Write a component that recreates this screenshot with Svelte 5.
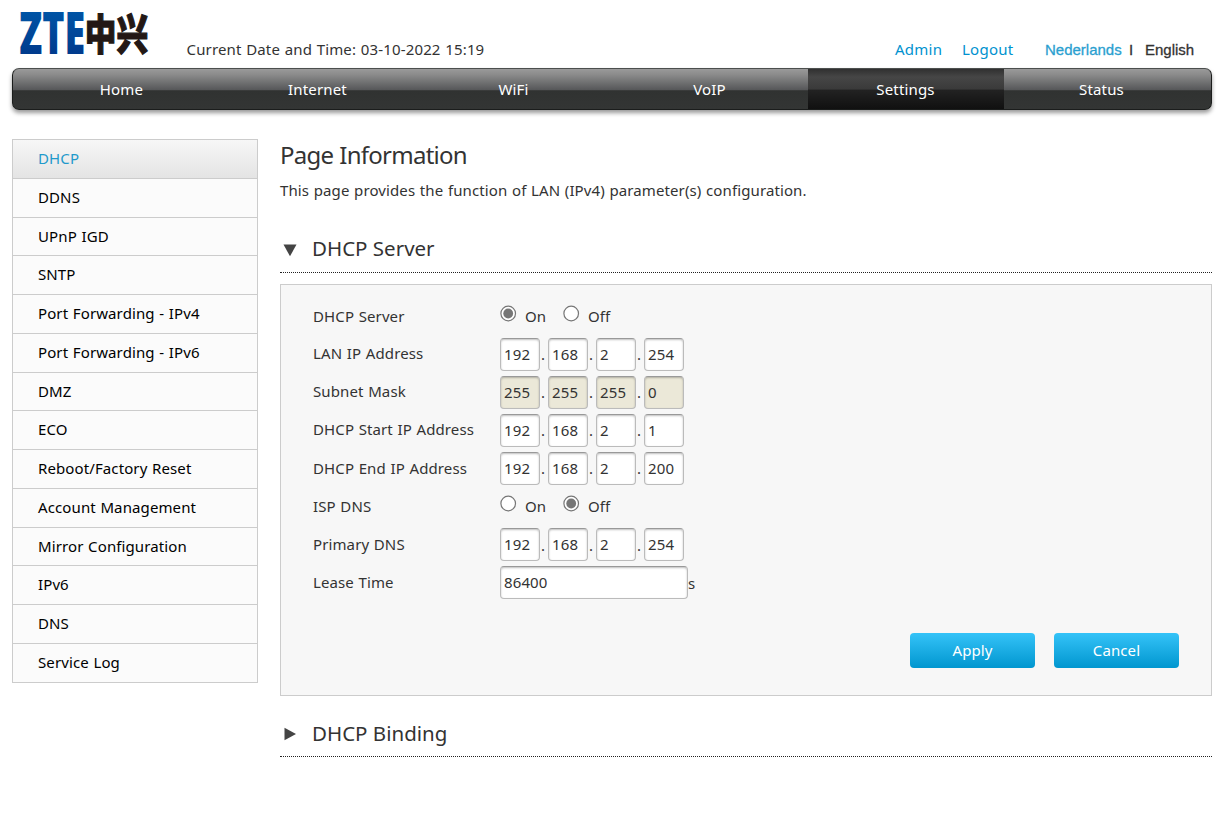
<script>
  const tabs = ['Home', 'Internet', 'WiFi', 'VoIP', 'Settings', 'Status'];
  const items = ['DHCP', 'DDNS', 'UPnP IGD', 'SNTP', 'Port Forwarding - IPv4', 'Port Forwarding - IPv6', 'DMZ', 'ECO', 'Reboot/Factory Reset', 'Account Management', 'Mirror Configuration', 'IPv6', 'DNS', 'Service Log'];
  const rows = [
    { label: 'DHCP Server', kind: 'radio', on: true },
    { label: 'LAN IP Address', kind: 'ip', value: [192, 168, 2, 254] },
    { label: 'Subnet Mask', kind: 'ip', value: [255, 255, 255, 0], disabled: true },
    { label: 'DHCP Start IP Address', kind: 'ip', value: [192, 168, 2, 1] },
    { label: 'DHCP End IP Address', kind: 'ip', value: [192, 168, 2, 200] },
    { label: 'ISP DNS', kind: 'radio', on: false },
    { label: 'Primary DNS', kind: 'ip', value: [192, 168, 2, 254] },
    { label: 'Lease Time', kind: 'text', value: 86400 },
  ];
</script>

{#snippet radio(checked)}
  <svg class="radio" width="17" height="17" viewBox="0 0 17 17">
    <circle cx="8.2" cy="8.5" r="7.3" fill="#fff" stroke="#767676" stroke-width="1.2" />
    {#if checked}<circle cx="8.2" cy="8.5" r="4.9" fill="#767676" />{/if}
  </svg>
{/snippet}

<div class="page">
  <header>
    <svg class="logo" width="132" height="48" viewBox="0 0 132 48">
      <defs>
        <linearGradient id="blue" x1="0" y1="0" x2="0" y2="1">
          <stop offset="0.2" stop-color="#0057a8" /><stop offset="0.8" stop-color="#003a8c" />
        </linearGradient>
      </defs>
      <text class="zte" transform="translate(2.3 44.8) scale(.6 1)" textLength="110" lengthAdjust="spacingAndGlyphs" fill="url(#blue)">ZTE</text>
      <text class="cjk" transform="translate(67.8 40.5) scale(1.02 1.36)" fill="#231815" stroke="#231815" stroke-width=".9">中兴</text>
    </svg>
    <span class="date">Current Date and Time: 03-10-2022 15:19</span>
    <span class="link admin">Admin</span>
    <span class="link logout">Logout</span>
    <span class="lang nl">Nederlands</span>
    <span class="lang bar">I</span>
    <span class="lang">English</span>
  </header>

  <nav class="tabs">
    {#each tabs as tab}
      <span class="tab" class:active={tab === 'Settings'}>{tab}</span>
    {/each}
  </nav>

  <div class="body">
    <aside>
      {#each items as item, i}
        <div class="item" class:current={i === 0}>{item}</div>
      {/each}
    </aside>

    <main>
      <h1>Page Information</h1>
      <p class="info">This page provides the function of LAN (IPv4) parameter(s) configuration.</p>

      <h2>
        <svg width="14" height="14" viewBox="0 0 14 14"><path d="M.5 1.5h13L7 13.3z" fill="#444" /></svg>
        <span>DHCP Server</span>
      </h2>

      <section class="panel">
        {#each rows as row}
          <div class="row">
            <span class="label" class:raised={row.kind !== 'radio'}>{row.label}</span>
            {#if row.kind === 'radio'}
              {@render radio(row.on)}<span class="opt on">On</span>
              {@render radio(!row.on)}<span class="opt">Off</span>
            {:else if row.kind === 'ip'}
              {#each row.value as part, i}
                <span class="field" class:disabled={row.disabled}>{part}</span>
                {#if i < 3}<span class="dot">.</span>{/if}
              {/each}
            {:else}
              <span class="field wide">{row.value}</span><span class="unit">s</span>
            {/if}
          </div>
        {/each}
        <div class="actions">
          <span class="button">Apply</span>
          <span class="button">Cancel</span>
        </div>
      </section>

      <h2 class="second">
        <svg width="14" height="14" viewBox="0 0 14 14"><path d="M1.5 .7v12.6L13 7z" fill="#444" /></svg>
        <span>DHCP Binding</span>
      </h2>
    </main>
  </div>
</div>

<style>
  :global(body) { background: #fff; overflow: hidden; }
  .page { width: 1200px; height: 828px; margin-left: 12px; font: 15px/20px "Noto Sans", "Open Sans", sans-serif; letter-spacing: .11px; word-spacing: .6px; color: #333; white-space: nowrap; box-sizing: border-box; }
  header { display: flex; align-items: flex-start; height: 68px; }
  .logo { margin: 9px 0 0 5px; flex: none; overflow: visible; letter-spacing: 0; }
  .zte { font: 900 58px "Open Sans", "Noto Sans", sans-serif; }
  .cjk { font: 900 31px "Noto Sans CJK SC", sans-serif; }
  .date { width: 746px; padding-left: 37.5px; margin-top: 39px; box-sizing: border-box; flex: none; letter-spacing: .15px; }
  .link { color: #0092cf; margin-top: 39px; letter-spacing: .25px; }
  .admin { width: 67px; flex: none; }
  .logout { width: 83px; flex: none; }
  .lang { font: 15px/20px "Liberation Sans", Arial, sans-serif; letter-spacing: 0; margin-top: 40px; -webkit-text-stroke: .3px currentColor; }
  .nl { color: #2aa0d0; width: 84px; flex: none; }
  .bar { width: 16px; flex: none; }

  .tabs { display: flex; height: 42px; box-sizing: border-box; padding: 0 11px; border: 1px solid #1b1d1c; border-top-color: #4c4f4e; border-radius: 7px; background: linear-gradient(#9a9a9a 0, #8a8a8a 15%, #555658 53%, #303231 54%, #333534 100%); box-shadow: 0 3px 4px rgba(0, 0, 0, .4); }
  .tab { width: 196px; flex: none; text-align: center; color: #fff; line-height: 41px; letter-spacing: .15px; text-indent: -1px; }
  .tab.active { background: linear-gradient(#303030, #464646 20%, #3a3a3a 50%, #222 53%, #101010); }

  .body { display: flex; gap: 22px; padding-top: 29px; }
  aside { width: 246px; box-sizing: border-box; border: 1px solid #ccc; border-bottom: 0; height: 544px; flex: none; }
  .item { height: 38.78px; box-sizing: border-box; border-bottom: 1px solid #ccc; padding-left: 25px; line-height: 36.4px; background: #fbfbfb; color: #000; }
  .item.current { color: #1f9acb; background: linear-gradient(#f7f7f7, #e4e4e4); }

  main { width: 932px; }
  h1 { margin: 0; font-size: 24px; line-height: 32px; font-weight: 400; letter-spacing: -.75px; }
  .info { margin: 8px 0 0; line-height: 22px; }
  h2 { display: flex; align-items: center; gap: 15px; margin: 25px 0 0; padding-left: 3px; height: 46px; border-bottom: 1px dotted #222; font-size: 20.5px; line-height: 42px; font-weight: 400; letter-spacing: 0; word-spacing: 0; }
  h2 span { margin-top: -2px; }
  h2 svg { margin-top: 2px; }
  .second { margin-top: 13px; height: 47px; }
  .second span { margin-top: 0; }
  .panel { height: 412px; box-sizing: border-box; margin-top: 11px; border: 1px solid #ccc; background: #f7f7f7; padding: 12px 32px 0; }
  .row { display: flex; align-items: center; height: 38.08px; }
  .label { width: 187px; flex: none; }
  .raised { padding-bottom: 1.6px; }
  .radio { flex: none; margin-top: -6px; }
  .opt { margin-left: 8px; }
  .opt.on { width: 38px; }
  .field { width: 40px; height: 33px; box-sizing: border-box; border: 1px solid #bbb; border-top-color: #999; border-radius: 4px; padding-left: 3px; line-height: 31px; background: #fff; box-shadow: inset 0 1px 2px rgba(0, 0, 0, .25); flex: none; }
  .field.disabled { background: #ebe8d8; }
  .field.wide { width: 188px; }
  .dot { width: 8px; text-align: center; text-indent: -2px; }
  .actions { display: flex; justify-content: flex-end; gap: 19px; margin-top: 31px; }
  .button { width: 125px; height: 35px; border-radius: 4px; background: linear-gradient(#35c3f8, #0096cf); color: #fff; line-height: 35px; text-align: center; }
</style>
